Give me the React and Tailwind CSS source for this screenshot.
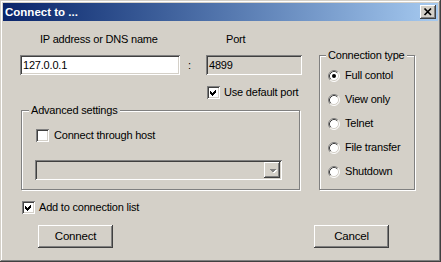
import React from "react";

const raised =
  "shadow-[inset_-1px_-1px_#404040,inset_1px_1px_#ffffff,inset_-2px_-2px_#808080,inset_2px_2px_#d4d0c8]";
const sunken =
  "shadow-[inset_1px_1px_#808080,inset_-1px_-1px_#ffffff,inset_2px_2px_#404040,inset_-2px_-2px_#d4d0c8]";
const etched = "border border-[#808080] shadow-[inset_1px_1px_#ffffff,1px_1px_#ffffff]";

function CheckBox({ checked }) {
  return (
    <div className={`w-[13px] h-[13px] bg-white shrink-0 ${sunken}`}>
      {checked && (
        <svg width="13" height="13" viewBox="0 0 13 13" shapeRendering="crispEdges">
          <polygon points="3,5 5,7 9,3 9,6 5,10 3,8" fill="#000" />
        </svg>
      )}
    </div>
  );
}

function Radio({ checked }) {
  return (
    <svg width="12" height="12" viewBox="0 0 12 12" className="shrink-0">
      <circle cx="6" cy="6" r="5" fill="#fff" />
      <path d="M2.11 9.89 A5.5 5.5 0 0 1 9.89 2.11" fill="none" stroke="#808080" strokeWidth="1" />
      <path d="M9.89 2.11 A5.5 5.5 0 0 1 2.11 9.89" fill="none" stroke="#ffffff" strokeWidth="1" />
      <path d="M2.82 9.18 A4.5 4.5 0 0 1 9.18 2.82" fill="none" stroke="#404040" strokeWidth="1" />
      <path d="M9.18 2.82 A4.5 4.5 0 0 1 2.82 9.18" fill="none" stroke="#d4d0c8" strokeWidth="1" />
      {checked && <circle cx="6" cy="6" r="2" fill="#000" />}
    </svg>
  );
}

function Legend({ children, ml }) {
  return (
    <div className="flex">
      <span className={`-mt-[7px] ${ml} px-[2px] bg-[#d4d0c8] h-[13px] leading-[13px] whitespace-nowrap`}>
        {children}
      </span>
    </div>
  );
}

export default function App() {
  const radios = ["Full contol", "View only", "Telnet", "File transfer", "Shutdown"];
  return (
    <div
      className="w-[441px] h-[262px] bg-[#d4d0c8] flex flex-col text-black text-[11px] tracking-[-0.2px] shadow-[inset_-1px_-1px_#404040,inset_1px_1px_#d4d0c8,inset_-2px_-2px_#808080,inset_2px_2px_#ffffff]"
      style={{ fontFamily: '"Liberation Sans", Arial, sans-serif' }}
    >
      {/* Title bar */}
      <div className="mt-[3px] mx-[3px] h-[18px] flex items-center justify-between bg-linear-to-r from-[#0a246a] to-[#a6caf0] pl-[2px] pr-[2px]">
        <span className="text-white font-bold text-[11.5px] tracking-normal leading-[18px]">Connect to ...</span>
        <div className={`w-[16px] h-[14px] bg-[#d4d0c8] flex items-center justify-center ${raised}`}>
          <svg width="16" height="14" viewBox="0 0 16 14">
            <path d="M4.5 3.5 L11 10 M11 3.5 L4.5 10" stroke="#000" strokeWidth="1.7" />
          </svg>
        </div>
      </div>

      {/* Content */}
      <div className="pt-[12px] flex flex-col">
        <div className="flex">
          {/* Left column */}
          <div className="ml-[20px] w-[282px] flex flex-col">
            <div className="flex h-[13px] leading-[13px]">
              <div className="w-[160px] pl-[20px]">IP address or DNS name</div>
              <div className="w-[26px]" />
              <div className="w-[96px] pl-[20px]">Port</div>
            </div>
            <div className="flex mt-[9px] h-[20px]">
              <div className={`w-[160px] h-[20px] bg-white flex items-center pl-[3px] ${sunken}`}>127.0.0.1</div>
              <div className="w-[26px] flex items-center pl-[8px]">:</div>
              <div className={`w-[96px] h-[20px] bg-[#d4d0c8] flex items-center pl-[3px] ${sunken}`}>4899</div>
            </div>
            <div className="flex mt-[11px] h-[13px] items-center">
              <div className="w-[187px]" />
              <CheckBox checked />
              <span className="ml-[4px] leading-[13px]">Use default port</span>
            </div>
            <div className={`mt-[11px] ml-[1px] w-[279px] h-[80px] flex flex-col ${etched}`}>
              <Legend ml="ml-[7px]">Advanced settings</Legend>
              <div className="flex mt-[12px] ml-[14px] h-[13px] items-center">
                <CheckBox />
                <span className="ml-[5px] leading-[13px]">Connect through host</span>
              </div>
              <div className={`mt-[18px] ml-[13px] w-[247px] h-[20px] bg-[#d4d0c8] flex justify-end p-[2px] ${sunken}`}>
                <div className={`w-[16px] h-[16px] bg-[#d4d0c8] flex items-center justify-center ${raised}`}>
                  <svg width="16" height="16" viewBox="0 0 16 16" shapeRendering="crispEdges">
                    <polygon points="6,8 13,8 9.5,11.5" fill="#ffffff" />
                    <polygon points="5,7 12,7 8.5,10.5" fill="#808080" />
                  </svg>
                </div>
              </div>
            </div>
            <div className="flex mt-[11px] ml-[2px] h-[13px] items-center">
              <CheckBox checked />
              <span className="ml-[4px] leading-[13px]">Add to connection list</span>
            </div>
          </div>

          {/* Right column */}
          <div className={`ml-[17px] mt-[22px] w-[96px] h-[135px] flex flex-col ${etched}`}>
            <Legend ml="ml-[6px]">Connection type</Legend>
            <div className="flex flex-col mt-[7px] ml-[8px] gap-[11px]">
              {radios.map((r, i) => (
                <div key={r} className="flex items-center h-[13px]">
                  <Radio checked={i === 0} />
                  <span className="ml-[5px] leading-[13px] whitespace-nowrap">{r}</span>
                </div>
              ))}
            </div>
          </div>
        </div>

        {/* Buttons */}
        <div className="flex mt-[11px]">
          <div className={`ml-[38px] w-[75px] h-[23px] bg-[#d4d0c8] flex items-center justify-center text-[11.5px] ${raised}`}>
            Connect
          </div>
          <div className={`ml-[201px] w-[75px] h-[23px] bg-[#d4d0c8] flex items-center justify-center text-[11.5px] ${raised}`}>
            Cancel
          </div>
        </div>
      </div>
    </div>
  );
}
